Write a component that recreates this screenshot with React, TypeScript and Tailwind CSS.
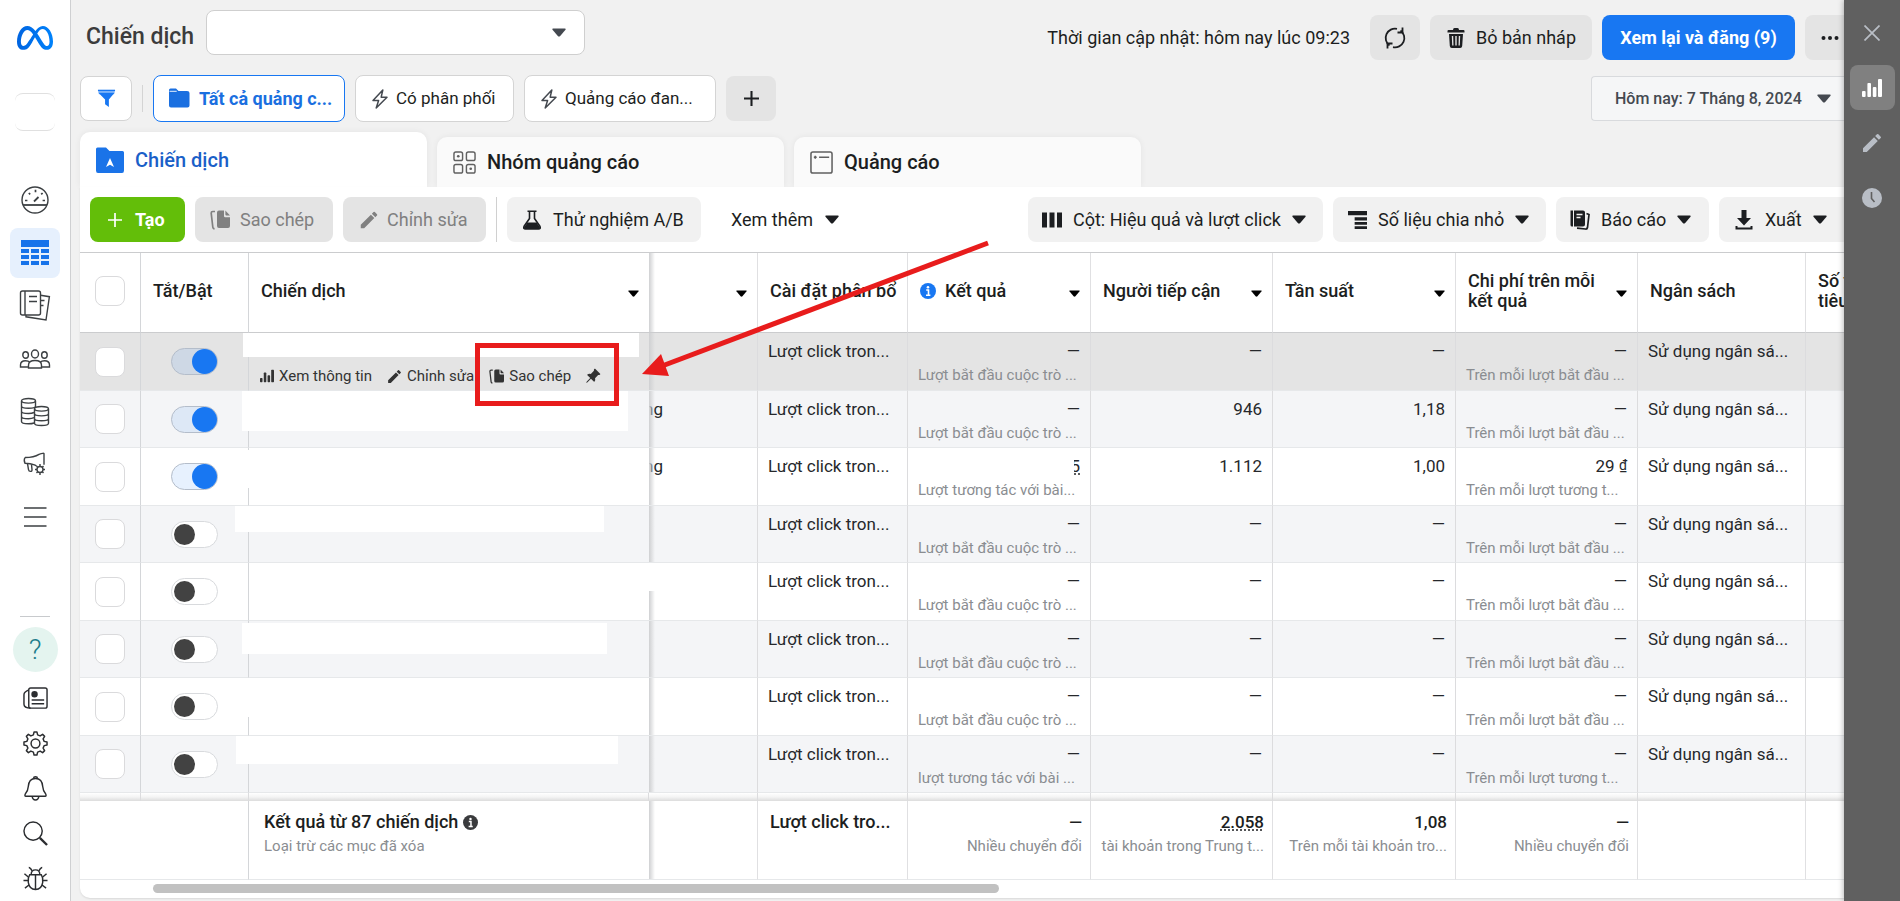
import type { ReactNode } from "react";
import { BsPinAngleFill } from "react-icons/bs";
import { FaMeta } from "react-icons/fa6";
import { MdEdit } from "react-icons/md";

function Icon({ className = "size-6", box = 24, children }: { className?: string; box?: number; children: ReactNode }) {
  return (
    <svg viewBox={`0 0 ${box} ${box}`} fill="none" stroke="currentColor" className={`shrink-0 ${className}`} aria-hidden="true">
      {children}
    </svg>
  );
}

function Caret({ className = "h-[9px] w-[14px]" }: { className?: string }) {
  return (
    <svg viewBox="0 0 14 9" className={`shrink-0 ${className}`} fill="currentColor" aria-hidden="true">
      <path d="M1 0.5h12q1 0 0.5 1.2L8.2 8q-1.2 1.2-2.4 0L0.5 1.7Q0 0.5 1 0.5z" />
    </svg>
  );
}

function CopyIcon({ className = "size-[20px]" }: { className?: string }) {
  return (
    <Icon box={20} className={className}>
      <path d="M5 1.5H2.8q-1.6 0-1.6 1.6L2.8 17q.2 1.8 1.8 1.6" strokeWidth="1.7" />
      <path d="M9 0.5h5V6q0 1.2 1.2 1.2H20V16q0 2-2 2H9q-2 0-2-2V2.5q0-2 2-2z" fill="currentColor" stroke="none" />
      <path d="M15.4 0.5L20 5.6h-3.6q-1 0-1-1z" fill="currentColor" stroke="none" />
    </Icon>
  );
}

function BarsIcon({ className }: { className?: string }) {
  return (
    <Icon box={20} className={className}>
      <g fill="currentColor" stroke="none">
        <rect x="0" y="13" width="3.6" height="6" rx="1" />
        <rect x="5.4" y="5" width="3.6" height="14" rx="1" />
        <rect x="10.8" y="9" width="3.6" height="10" rx="1" />
        <rect x="16" y="1" width="4" height="18" rx="1" />
      </g>
    </Icon>
  );
}

function BoltIcon() {
  return (
    <Icon box={20} className="size-[20px] text-[#444950]">
      <path d="M12.8 1L3 11.4h5.6L6.2 19 17 8.2h-5.8z" strokeWidth="1.5" strokeLinejoin="round" />
    </Icon>
  );
}

function InfoIcon({ className }: { className: string }) {
  return (
    <Icon box={16} className={className}>
      <circle cx="8" cy="8" r="8" fill="currentColor" stroke="none" />
      <circle cx="8" cy="4.2" r="1.3" fill="#fff" stroke="none" />
      <path d="M6.2 7h2.3v5M6 12.2h4.4" stroke="#fff" strokeWidth="1.6" />
    </Icon>
  );
}

const mainNav = [
  {
    label: "Tổng quan",
    icon: (
      <>
        <circle cx="14" cy="14" r="13" />
        <path d="M2 19h24" strokeWidth="1.8" />
        <path d="M13 15.5l4.5-4.5" strokeWidth="1.8" />
        <path d="M14.5 3.8v2.4M7.8 7l1.4 1.4M21.6 7l-1.4 1.4M4 14.5h2.4M21.6 14.5H24" strokeWidth="1.7" />
      </>
    ),
  },
  {
    label: "Chiến dịch",
    active: true,
    icon: (
      <g fill="currentColor" stroke="none">
        <rect x="0" y="1" width="28" height="7" />
        {[10, 16, 22].map((y) =>
          [0, 10, 20].map((x) => <rect key={`${x}-${y}`} x={x} y={y} width="8" height="4" />)
        )}
      </g>
    ),
  },
  {
    label: "Báo cáo quảng cáo",
    icon: (
      <>
        <rect x="-0.5" y="-1" width="20" height="24" rx="2" />
        <path d="M4 -1v24M8 4.5h8M8 9.500h8" />
        <path d="M19.500 3.200l8.900 1.500-3.400 23.300-20-3.200V23M20 8.500h3.500M20 13.500h2.500" />
      </>
    ),
  },
  {
    label: "Đối tượng",
    icon: (
      <>
        <ellipse cx="14" cy="9" rx="3.5" ry="4" />
        <ellipse cx="4.6" cy="10" rx="2.8" ry="3.3" />
        <ellipse cx="23.4" cy="10" rx="2.8" ry="3.3" />
        <path d="M7.5 23v-3q0-4.5 6.5-4.5t6.5 4.5v3z" />
        <path d="M7 22H-0.5v-2q0-4.2 5-4.2 3 0 4 1.4M21 22h7.5v-2q0-4.2-5-4.2-3 0-4 1.4" />
      </>
    ),
  },
  {
    label: "Thanh toán",
    icon: (
      <>
        <ellipse cx="7.5" cy="2.8" rx="7" ry="2.3" />
        <path d="M0.5 3v20.5q0 2.3 7 2.3 3.4 0 5.600-.8M14.500 3v6M0.500 8q0 2.300 7 2.300t7-2M0.500 13.200q0 2.300 7 2.300 3.500 0 5.500-1M0.500 18.400q0 2.300 7 2.300 3.500 0 5.500-1" />
        <ellipse cx="20.5" cy="10.8" rx="7" ry="2.3" />
        <path d="M13.5 11v14.200q0 2.300 7 2.300t7-2.300V11M13.500 15.600q0 2.300 7 2.300t7-2.300M13.500 20.400q0 2.300 7 2.300t7-2.300" />
      </>
    ),
  },
  {
    label: "Cài đặt quảng cáo",
    icon: (
      <>
        <path d="M4 6.5q9 0 14-3.2 5-1.6 5-.6v11M4 6.5Q2.5 9 4 12.3q5.500 0 9.500 1.600l2 1" />
        <path d="M6.5 12.600l1 6q.3 1.800 2 1.800t1.500-1.800l-.5-5.200" />
        <circle cx="19" cy="18.500" r="3" />
        <path d="M19 13v2.500M19 21.500V24M14 18.500h2M22 18.500h2M15.500 15l1.400 1.400M22.500 15l-1.400 1.400M15.500 22l1.400-1.400M22.500 22l-1.400-1.400" />
      </>
    ),
  },
  { label: "Tất cả công cụ", icon: <path d="M3 4h22.500M3 13h22.500M3 22h22.500" strokeWidth="1.600" /> },
];

const footNav = [
  {
    label: "Tin tức",
    icon: (
      <>
        <rect x="6" y="2" width="19" height="21" rx="2" />
        <path d="M6 4Q1 6 1 9v10q0 4 7 4M9 14.500h13M9 18.500h13" />
        <circle cx="12" cy="8.500" r="2.600" fill="currentColor" />
      </>
    ),
  },
  {
    label: "Cài đặt",
    icon: (
      <>
        <circle cx="13" cy="13" r="4.600" />
        <path
          strokeLinejoin="round"
          d="M10.800 4L11.500 1h3l.7 3 2.600 1.100L20.400 3.500l2.100 2.100-1.600 2.600L22 10.800l3 .7v3l-3 .7-1.100 2.600 1.600 2.600-2.100 2.100-2.600-1.600L15.200 22l-.7 3h-3l-.7-3-2.600-1.100-2.600 1.600-2.100-2.100 1.600-2.600L4 15.200l-3-.7v-3l3-.7 1.100-2.600-1.600-2.600 2.100-2.100 2.600 1.600z"
        />
      </>
    ),
  },
  {
    label: "Thông báo",
    icon: (
      <>
        <path d="M13 2.500q7 0 7.500 8.500.3 4.500 3 7.500 1.200 2.500-.5 2.500H3q-1.700 0-.5-2.500 2.700-3 3-7.500Q6 2.500 13 2.500z" />
        <path d="M11 2.300q0-1.500 2-1.500t2 1.500M9.500 21q.5 4 3.500 4t3.500-4" />
      </>
    ),
  },
  {
    label: "Tìm kiếm",
    icon: (
      <>
        <circle cx="10.500" cy="10.500" r="9.500" />
        <path d="M17.500 17.500l7.500 7.500" strokeWidth="2.400" />
      </>
    ),
  },
  {
    label: "Báo lỗi",
    icon: (
      <>
        <path d="M7 9h12q2 3 1.500 8-1 7-7.500 7.500Q6.500 24 5.500 17 5 12 7 9zM8.500 9q0-5 4.500-5t4.500 5M13 9v15" />
        <path d="M6 1.500q1.500 0 3.500 3.500M20 1.500q-1.500 0-3.500 3.500M1.500 8l4 3.500M24.500 8l-4 3.500M0.500 15h5M20.500 15h5M2 23l4.500-3.500M24 23l-4.500-3.500" />
      </>
    ),
  },
];

function SideNav() {
  return (
    <nav className="flex w-[71px] shrink-0 flex-col items-center border-r border-[#cfd0d2] bg-white text-[#3c4043]" aria-label="Điều hướng">
      <a href="#" aria-label="Meta" className="mt-[20px] flex h-[35px] items-center">
        <svg width="0" height="0" className="absolute">
          <linearGradient id="metaBlue">
            <stop offset="0" stopColor="#0064e0" />
            <stop offset="0.5" stopColor="#0073ee" />
            <stop offset="1" stopColor="#0082fb" />
          </linearGradient>
        </svg>
        <FaMeta className="size-[36px]" fill="url(#metaBlue)" />
      </a>
      <div className="mt-[38px] h-[8px] w-[40px] rounded-t-lg border-t border-[#e0e0e0]" />
      <div className="mt-[22px] h-[8px] w-[40px] rounded-b-lg border-b border-[#e0e0e0]" />
      <ul className="mt-[44px] flex flex-col gap-[3px]">
        {mainNav.map((item) => (
          <li key={item.label}>
            <a
              href="#"
              aria-label={item.label}
              className={`flex size-[50px] items-center justify-center rounded-lg ${item.active ? "bg-[#e6f0fd] text-[#1773ea]" : ""}`}
            >
              <Icon box={28} className="size-[28px] overflow-visible">
                <g strokeWidth={1.400}>{item.icon}</g>
              </Icon>
            </a>
          </li>
        ))}
      </ul>
      <div className="mt-auto flex flex-col items-center">
        <div className="h-px w-[30px] bg-[#c8cacd]" />
        <button aria-label="Trợ giúp" className="mt-[10px] flex size-[45px] items-center justify-center rounded-full bg-[#e4f4ef] text-[28px] leading-none font-light text-[#1d7c8c]">
          ?
        </button>
        <ul className="mt-[4px] flex flex-col">
          {footNav.map((item) => (
            <li key={item.label}>
              <a href="#" aria-label={item.label} className="flex size-[45px] items-center justify-center text-[#2b2d30]">
                <Icon box={26} className="size-[25px]">
                  <g strokeWidth={1.500}>{item.icon}</g>
                </Icon>
              </a>
            </li>
          ))}
        </ul>
      </div>
    </nav>
  );
}

const greyButton = "flex h-[45px] shrink-0 items-center rounded-lg bg-[#e4e4e4] text-[18px]";
const lightButton = "flex h-[45px] shrink-0 items-center rounded-lg bg-[#f1f1f1] text-[18px]";

function Header() {
  return (
    <header className="flex h-[75px] items-start pt-[10px]">
      <h1 className="ml-[6px] w-[120px] shrink-0 pt-[11px] text-[23px] leading-8 font-medium whitespace-nowrap text-[#3c3c3c]">Chiến dịch</h1>
      <button aria-label="Chọn tài khoản" className="flex h-[45px] w-[379px] shrink-0 items-center justify-end rounded-lg border border-[#cfcfcf] bg-white pr-[18px] text-[#444950]">
        <Caret />
      </button>
      <div className="mt-[5px] ml-auto flex items-center gap-[10px]">
        <span className="mr-[10px] text-[18px] whitespace-nowrap">Thời gian cập nhật: hôm nay lúc 09:23</span>
        <button aria-label="Làm mới" className={`${greyButton} w-[50px] justify-center`}>
          <Icon box={22} className="size-[22px]">
            <path d="M5.500 18.500A9.300 9.300 0 0 1 13 1.900M16.500 3.500A9.300 9.300 0 0 1 9 20.100" strokeWidth="1.800" />
            <path d="M13.500 5.500h5V0.500M8.500 16.500h-5v5" strokeWidth="1.800" />
          </Icon>
        </button>
        <button className={`${greyButton} w-[162px] gap-[10px] pl-[16px]`}>
          <Icon box={20} className="size-[20px]">
            <g fill="currentColor" stroke="none">
              <path d="M1.500 3q0-1 1-1H7q0-2 1.500-2h3Q13 0 13 2h4.500q1 0 1 1v1.500h-17z" />
              <path fillRule="evenodd" d="M3 6h14l-.8 12q-.2 2-2 2H5.800q-1.800 0-2-2zM5.800 8l.4 9.500h1.300L7.200 8zM9.300 8v9.500h1.400V8zM12.800 8l-.3 9.500h1.300l.4-9.500z" />
            </g>
          </Icon>
          Bỏ bản nháp
        </button>
        <button className="h-[45px] w-[193px] shrink-0 rounded-lg bg-[#1877f2] text-[18px] font-bold text-white">Xem lại và đăng (9)</button>
        <button aria-label="Thêm" className="flex h-[45px] w-[39px] shrink-0 items-center rounded-l-lg bg-[#e4e4e4] pl-[16px]">
          <Icon box={18} className="size-[18px]">
            <g fill="currentColor" stroke="none">
              <circle cx="2.500" cy="9" r="2" />
              <circle cx="9" cy="9" r="2" />
              <circle cx="15.500" cy="9" r="2" />
            </g>
          </Icon>
        </button>
      </div>
    </header>
  );
}

function FilterBar() {
  const chip = "flex h-[47px] shrink-0 items-center rounded-lg border bg-white whitespace-nowrap";
  return (
    <div className="flex items-center">
      <button aria-label="Bộ lọc" className="flex h-[45px] w-[52px] shrink-0 items-center justify-center rounded-lg border border-[#d4d4d4] bg-white text-[#1877f2]">
        <Icon box={20} className="size-[19px]">
          <path d="M1 1h18l-1 4.500H2z" fill="#8dbcf8" stroke="none" />
          <path d="M1.500 4h17L12.500 11v8l-4-3v-5z" fill="currentColor" stroke="none" />
          <path d="M1 1.500h18" strokeWidth="1.500" />
        </Icon>
      </button>
      <div className="mx-[10px] h-[27px] w-px shrink-0 bg-[#d4d4d4]" />
      <div className="flex items-center gap-[10px]">
        <button className={`${chip} w-[192px] gap-[9px] border-[#1877f2] pl-[15px] text-[18px] font-bold text-[#1a6fe0]`}>
          <Icon box={21} className="size-[21px]">
            <path d="M0 4V2Q0 0.500 1.500 0.500H7L9.500 3H18q2.500 0 2.500 2v12.500q0 2-2 2H2q-2 0-2-2z" fill="currentColor" stroke="none" />
            <path d="M0.500 3.300h7.200" stroke="#fff" strokeWidth="0.900" />
          </Icon>
          Tất cả quảng c...
        </button>
        <button className={`${chip} w-[159px] gap-[6px] border-[#d4d4d4] pl-[14px] text-[17px]`}>
          <BoltIcon />
          Có phân phối
        </button>
        <button className={`${chip} w-[192px] gap-[6px] border-[#d4d4d4] pl-[14px] text-[17px]`}>
          <BoltIcon />
          Quảng cáo đan...
        </button>
        <button aria-label="Thêm bộ lọc" className={`${greyButton} w-[50px] justify-center`}>
          <Icon box={16} className="size-[15px]">
            <path d="M8 0v16M0 8h16" strokeWidth="2.200" />
          </Icon>
        </button>
      </div>
      <button className="ml-auto flex h-[45px] w-[253px] shrink-0 items-center gap-[15px] rounded-l-sm border border-r-0 border-[#d8dadd] bg-[#f5f6f7] pl-[23px] text-[16px] font-medium whitespace-nowrap text-[#444950]">
        Hôm nay: 7 Tháng 8, 2024
        <Caret />
      </button>
    </div>
  );
}

function Tabs() {
  const tab = "flex w-[347px] items-center gap-[11px] rounded-t-[10px] pl-[16px] text-[20px] font-medium shadow-[0_0_6px_rgba(0,0,0,0.06)]";
  return (
    <div role="tablist" className="mt-[10px] flex items-end gap-[10px]">
      <button role="tab" aria-selected="true" className={`${tab} h-[55px] bg-white text-[#1a5fc8]`}>
        <Icon box={28} className="size-[28px]">
          <path d="M0 3q0-1.500 1.500-1.500H10L13.500 5H26.500Q28 5 28 6.500v18q0 2.500-2 2.500H2Q0 27 0 24.500z" fill="#1a73e8" stroke="none" />
          <path d="M14 12l4 9-4-2.300L10 21z" fill="#fff" stroke="none" />
        </Icon>
        Chiến dịch
      </button>
      <button role="tab" aria-selected="false" className={`${tab} h-[50px] bg-[#fafafa]`}>
        <Icon box={24} className="size-[23px] text-[#606060]">
          <g strokeWidth="1.500">
            <rect x="1" y="1" width="9" height="9" rx="2" />
            <rect x="14" y="1" width="9" height="9" rx="2" />
            <rect x="1" y="14" width="9" height="9" rx="2" />
            <rect x="14" y="14" width="9" height="9" rx="2" />
          </g>
          <circle cx="5.500" cy="5.500" r="1.400" fill="currentColor" stroke="none" />
          <circle cx="18.500" cy="18.500" r="1.400" fill="currentColor" stroke="none" />
        </Icon>
        Nhóm quảng cáo
      </button>
      <button role="tab" aria-selected="false" className={`${tab} h-[50px] bg-[#fafafa]`}>
        <Icon box={24} className="size-[23px] text-[#606060]">
          <rect x="1" y="1" width="22" height="22" rx="2" strokeWidth="1.600" />
          <path d="M9.500 6.500H20M4 6.500h3M5.500 5v3" strokeWidth="1.600" />
        </Icon>
        Quảng cáo
      </button>
    </div>
  );
}

function Toolbar() {
  return (
    <div className="flex h-[65px] shrink-0 items-center gap-[10px] pl-[10px] whitespace-nowrap">
      <button className="flex h-[45px] w-[95px] shrink-0 items-center gap-[13px] rounded-lg bg-[#63be09] pl-[18px] text-[18px] font-bold text-white">
        <Icon box={14} className="size-[14px]">
          <path d="M7 0v14M0 7h14" strokeWidth="1.700" />
        </Icon>
        Tạo
      </button>
      <button disabled className={`${greyButton} w-[138px] gap-[10px] pl-[15px] text-[#808080]`}>
        <CopyIcon />
        Sao chép
      </button>
      <button disabled className={`${greyButton} w-[143px] gap-[7px] pl-[15px] text-[#808080]`}>
        <MdEdit className="size-[22px]" />
        Chỉnh sửa
      </button>
      <div className="h-[45px] w-px shrink-0 bg-[#d0d0d0]" />
      <button className={`${lightButton} w-[194px] gap-[11px] pl-[15px]`}>
        <Icon box={20} className="size-[20px]">
          <path d="M5.500 1.200h9M7.500 1.500v7L2 16.500Q1 19 3.500 19h13q2.500 0 1.500-2.500L12.500 8.500v-7" strokeWidth="1.600" />
          <path d="M5.500 12.500h9l3.500 5q.5 1.500-1.500 1.500h-13Q1.500 19 2 17.500z" fill="currentColor" stroke="none" />
        </Icon>
        Thử nghiệm A/B
      </button>
      <button className="flex h-[45px] shrink-0 items-center gap-[12px] px-[20px] text-[18px]">
        Xem thêm
        <Caret />
      </button>
      <div className="ml-auto flex gap-[10px]">
        <button className={`${lightButton} w-[295px] gap-[11px] pl-[14px]`}>
          <Icon box={20} className="size-[20px]">
            <path d="M0 2.500h5v15H0zM7.500 2.500h5v15h-5zM15 2.500h5v15h-5z" fill="currentColor" stroke="none" />
          </Icon>
          Cột: Hiệu quả và lượt click
          <Caret />
        </button>
        <button className={`${lightButton} w-[213px] gap-[11px] pl-[15px]`}>
          <Icon box={20} className="size-[19px]">
            <path d="M0 1h20v4.500H0zM7 7.500h13V11H7zM7 12.500h13v3H7zM7 17h13v3H7z" fill="currentColor" stroke="none" />
          </Icon>
          Số liệu chia nhỏ
          <Caret />
        </button>
        <button className={`${lightButton} w-[153px] gap-[11px] pl-[14px]`}>
          <Icon box={20} className="size-[20px]">
            <path d="M0.500 0.500h2.500v16h-1q-1.500 0-1.500-1.500zM4 0.500h9q2 0 2 2v12q0 2-2 2H4z" fill="currentColor" stroke="none" />
            <path d="M6.500 4.500h6M6.500 7.500h4" stroke="#f1f1f1" strokeWidth="1.300" />
            <path d="M16.500 3.500l2.500 1-1.500 13q-.3 1.700-2 1.500L7 18.200" strokeWidth="1.700" />
          </Icon>
          Báo cáo
          <Caret />
        </button>
        <button className={`${lightButton} w-[125px] gap-[11px] rounded-r-none pl-[15px]`}>
          <Icon box={20} className="size-[20px]">
            <path d="M7.500 0h5v8H17l-7 7.500L3 8h4.500z" fill="currentColor" stroke="none" />
            <path d="M2.500 16v2.500h15V16" strokeWidth="2" />
          </Icon>
          Xuất
          <Caret />
        </button>
      </div>
    </div>
  );
}

type Row = {
  on?: boolean;
  mask?: string;
  placement?: string;
  result?: ReactNode;
  resultNote: string;
  reach?: string;
  frequency?: string;
  cost?: ReactNode;
  costNote: string;
};

const started = "Lượt bắt đầu cuộc trò ...";
const perStarted = "Trên mỗi lượt bắt đầu ...";
const perEngaged = "Trên mỗi lượt tương t...";

const rows: Row[] = [
  { on: true, mask: "left-[-6px] top-0 h-[24px] w-[396px]", resultNote: started, costNote: perStarted },
  { on: true, mask: "left-[-7px] top-0 h-[40px] w-[386px]", placement: "ng", resultNote: started, reach: "946", frequency: "1,18", costNote: perStarted },
  {
    on: true,
    mask: "left-[-5px] top-[2px] h-[38px] w-[380px]",
    placement: "ng",
    result: <span className="ml-auto flex w-[6px] justify-end overflow-hidden underline decoration-dotted underline-offset-2">5</span>,
    resultNote: "Lượt tương tác với bài...",
    reach: "1.112",
    frequency: "1,00",
    cost: (
      <>
        29 <span className="align-[2px] text-[14px] leading-none">₫</span>
      </>
    ),
    costNote: perEngaged,
  },
  { mask: "left-[-14px] top-0 h-[26px] w-[369px]", resultNote: started, costNote: perStarted },
  { mask: "left-px top-0 h-[28px] w-[406px]", resultNote: started, costNote: perStarted },
  { mask: "left-[-7px] top-[2px] h-[31px] w-[365px]", resultNote: started, costNote: perStarted },
  { mask: "left-[-5px] top-0 h-[39px] w-[380px]", resultNote: started, costNote: perStarted },
  { mask: "left-[-13px] top-0 h-[28px] w-[382px]", resultNote: "lượt tương tác với bài ...", costNote: perEngaged },
];

function RowActions() {
  return (
    <div className="flex items-center pt-[31px] pl-[11px] text-[15px] leading-6 whitespace-nowrap text-[#333]">
      <button className="flex items-center gap-[5px]">
        <BarsIcon className="size-[14px]" />
        Xem thông tin
      </button>
      <button className="ml-[14px] flex items-center gap-[4px]">
        <MdEdit className="size-[17px]" />
        Chỉnh sửa
      </button>
      <button className="ml-[15px] flex items-center gap-[5px]">
        <CopyIcon className="size-[15px]" />
        Sao chép
      </button>
      <button aria-label="Ghim" className="ml-[14px]">
        <BsPinAngleFill className="size-[16px]" />
      </button>
    </div>
  );
}

function Metric({ value = "—", note }: { value?: ReactNode; note?: string }) {
  return (
    <td className="border-r border-[#dcdcde] px-[10px]">
      <div className="text-right text-[17px] leading-6">{value}</div>
      {note && <div className="text-[15px] leading-6 text-[#8a8d91]">{note}</div>}
    </td>
  );
}

function TotalMetric({ value, note }: { value: ReactNode; note: string }) {
  return (
    <td className="border-r border-[#e0e0e2] pr-[8px] text-right">
      <div className="text-[17px] leading-6 font-medium">{value}</div>
      <div className="text-[15px] leading-6 text-[#8a8d91]">{note}</div>
    </td>
  );
}

const columns: { label?: ReactNode; caret?: boolean; info?: boolean }[] = [
  { label: "Chiến dịch", caret: true },
  { caret: true },
  { label: "Cài đặt phân bổ" },
  { label: "Kết quả", caret: true, info: true },
  { label: "Người tiếp cận", caret: true },
  { label: "Tần suất", caret: true },
  { label: <>Chi phí trên mỗi<br />kết quả</>, caret: true },
  { label: "Ngân sách" },
];

// Edge of the pinned columns
function PinShadow() {
  return <span className="absolute inset-y-0 left-full z-10 w-[6px] bg-linear-to-r from-[#cfd0d2] to-transparent" />;
}

function CampaignTable() {
  const check = "block size-[30px] mx-auto appearance-none rounded-lg border border-[#dadadc] bg-white";
  const side = "border-r border-[#d4d6d9]";
  return (
    <table className="w-full table-fixed border-separate border-spacing-0 border-t border-[#cbccce] text-left whitespace-nowrap">
      <colgroup>
        <col className="w-[61px]" />
        <col className="w-[108px]" />
        <col className="w-[400px]" />
        <col className="w-[109px]" />
        <col className="w-[150px]" />
        <col className="w-[183px]" />
        <col className="w-[182px]" />
        <col className="w-[183px]" />
        <col className="w-[182px]" />
        <col className="w-[168px]" />
        <col />
      </colgroup>
      <thead>
        <tr className="h-[80px] text-[18px] leading-5 *:border-b *:border-b-[#cbccce] *:pb-[3px]">
          <th className={side}>
            <input type="checkbox" aria-label="Chọn tất cả" className={check} />
          </th>
          <th className={`${side} pl-[12px] font-medium`}>Tắt/Bật</th>
          {columns.map((col, i) => (
            <th key={i} className={`relative px-[12px] font-medium ${i === 0 ? "" : "border-r border-r-[#e0e0e2]"}`}>
              <div className="flex items-center">
                {col.info && <InfoIcon className="mr-[9px] size-[16px] text-[#1877f2]" />}
                <span>{col.label}</span>
                {col.caret && <Caret className="absolute top-[37px] right-[10px] h-[7px] w-[11px] text-black" />}
              </div>
              {i === 0 && <PinShadow />}
            </th>
          ))}
          <th className="overflow-hidden pl-[12px] font-medium">
            Số tiền
            <br />
            tiêu
          </th>
        </tr>
      </thead>
      <tbody>
        {rows.map((row, i) => (
          <tr
            key={i}
            className={`align-top text-[#26282b] odd:h-[58px] even:h-[57px] *:border-b *:border-b-[#e6e8ea] [&>td]:pt-[6px] ${
              i === 0 ? "bg-[#e4e4e4]" : i % 2 ? "bg-[#f4f5f7]" : "bg-white"
            }`}
          >
            <td className={`${side} align-middle pt-0!`}>
              <input type="checkbox" aria-label={`Chọn chiến dịch ${i + 1}`} className={check} />
            </td>
            <td className={`${side} align-middle pt-0!`}>
              <input
                type="checkbox"
                role="switch"
                defaultChecked={row.on}
                aria-label={`Bật chiến dịch ${i + 1}`}
                className="relative mx-auto block h-[27px] w-[47px] appearance-none rounded-full border border-[#d8dadd] bg-white before:absolute before:top-[2px] before:left-[2px] before:size-[21px] before:rounded-full before:bg-[#424242] checked:border-[#b4bdca] checked:bg-[#1877f2]/10 checked:before:top-0 checked:before:left-[20px] checked:before:size-[25px] checked:before:bg-[#1877f2]"
              />
            </td>
            <td className="relative pt-0!">
              <PinShadow />
              {row.mask && <span className={`absolute z-10 bg-white ${row.mask}`} />}
              {i === 0 && <RowActions />}
            </td>
            <td className="border-r border-[#dcdcde]">
              {row.placement && <div className="flex w-[14px] justify-end overflow-hidden text-[17px] leading-6">{row.placement}</div>}
            </td>
            <td className="border-r border-[#dcdcde] pl-[10px] text-[17px] leading-6">Lượt click tron...</td>
            <Metric value={row.result} note={row.resultNote} />
            <Metric value={row.reach} />
            <Metric value={row.frequency} />
            <Metric value={row.cost} note={row.costNote} />
            <td className="border-r border-[#dcdcde] pl-[10px] text-[17px] leading-6">Sử dụng ngân sá...</td>
            <td />
          </tr>
        ))}
      </tbody>
      <tfoot>
        <tr className="h-[8px] bg-linear-to-b from-white via-[#f4f4f4] to-[#dcdcdc]">
          {Array.from({ length: 11 }, (_, i) => (
            <td key={i} className={i === 10 ? "" : "border-r border-[#dcdcde]"} />
          ))}
        </tr>
        <tr className="h-[79px] align-top *:border-b *:border-b-[#e6e8ea] [&>td]:pt-[9px]">
          <td />
          <td className={side} />
          <td className="relative pl-[15px]">
            <PinShadow />
            <div className="flex items-center gap-[5px] text-[18px] leading-6 font-medium">
              Kết quả từ 87 chiến dịch
              <InfoIcon className="size-[15px] text-[#3a3b3d]" />
            </div>
            <div className="text-[15px] leading-6 text-[#8a8d91]">Loại trừ các mục đã xóa</div>
          </td>
          <td className="border-r border-[#e0e0e2]" />
          <td className="border-r border-[#e0e0e2] pl-[12px] text-[18px] leading-6 font-medium">Lượt click tro...</td>
          <TotalMetric value="—" note="Nhiều chuyển đổi" />
          <TotalMetric value={<span className="underline decoration-dotted underline-offset-2">2.058</span>} note="tài khoản trong Trung t..." />
          <TotalMetric value="1,08" note="Trên mỗi tài khoản tro..." />
          <TotalMetric value="—" note="Nhiều chuyển đổi" />
          <td className="border-r border-[#e0e0e2]" />
          <td />
        </tr>
      </tfoot>
    </table>
  );
}

function RightRail() {
  return (
    <aside className="relative z-10 flex w-[56px] shrink-0 flex-col items-center bg-[#606060] pt-[10px] text-[#b9bec6] shadow-[0_0_6px_rgba(0,0,0,0.35)]">
      <button aria-label="Đóng" className="flex size-[45px] items-center justify-center">
        <Icon box={16} className="size-[16px]">
          <path d="M0.500 0.500l15 15M15.500 0.500l-15 15" strokeWidth="1.700" />
        </Icon>
      </button>
      <button aria-label="Biểu đồ" className="mt-[10px] flex size-[45px] items-center justify-center rounded-lg bg-[#808080] text-white">
        <BarsIcon className="size-[20px]" />
      </button>
      <button aria-label="Chỉnh sửa" className="mt-[10px] flex size-[45px] items-center justify-center">
        <MdEdit className="size-[24px]" />
      </button>
      <button aria-label="Lịch sử" className="mt-[10px] flex size-[45px] items-center justify-center">
        <Icon box={20} className="size-[20px]">
          <circle cx="10" cy="10" r="10" fill="currentColor" stroke="none" />
          <path d="M9.500 4v6.500l3 3.500" stroke="#606060" strokeWidth="1.600" />
        </Icon>
      </button>
    </aside>
  );
}

function Callout() {
  return (
    <svg className="pointer-events-none absolute top-[238px] left-[470px] z-20 h-[172px] w-[525px]" viewBox="470 238 525 172" aria-hidden="true">
      <rect x="477.500" y="345.500" width="139" height="58" fill="none" stroke="#e81c1c" strokeWidth="5" />
      <path d="M988 243L662 366" stroke="#e81c1c" strokeWidth="5" />
      <path d="M642 374l19-20 8 22z" fill="#e81c1c" />
    </svg>
  );
}

export default function App() {
  return (
    <div className="relative flex min-h-screen overflow-hidden bg-[#f1f1f1] text-[#1c1e21] [font-family:Roboto,sans-serif]">
      <SideNav />
      <main className="flex min-w-0 flex-1 flex-col pb-[3px] pl-[9px]">
        <Header />
        <FilterBar />
        <Tabs />
        <section className="overflow-hidden rounded-bl-[10px] bg-white shadow-[0_1px_2px_rgba(0,0,0,0.1)]">
          <Toolbar />
          <CampaignTable />
          <div className="h-[18px] pt-[4px] pl-[73px]">
            <div className="h-[9px] w-1/2 rounded-full bg-[#c1c1c1]" />
          </div>
        </section>
      </main>
      <RightRail />
      <Callout />
    </div>
  );
}
